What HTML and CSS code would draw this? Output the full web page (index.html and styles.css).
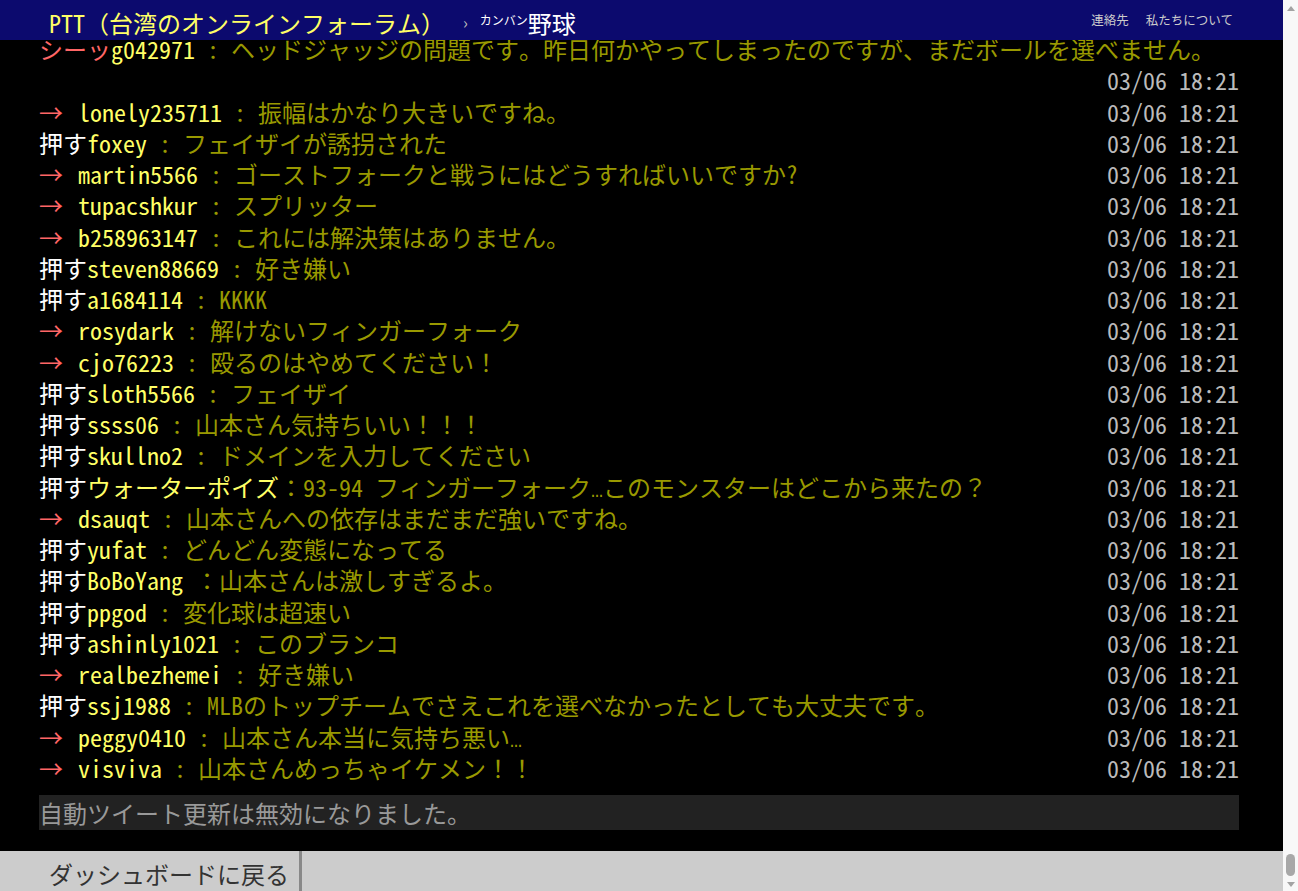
FILE: index.html
```html
<!DOCTYPE html>
<html lang="ja">
<head>
  <meta charset="UTF-8" />
  <meta name="viewport" content="width=device-width, initial-scale=1.0"/>
  <title>野球 | PTT</title>
  <link rel="stylesheet" href="styles.css">
</head>
<body>

<div class="page">
  <header class="topbar">
    <span class="brand">PTT（台湾のオンラインフォーラム）</span>
    <span class="crumb-sep">›</span>
    <span class="board-label">カンバン</span><span class="board">野球</span>
    <nav class="links">
      <a href="#">連絡先</a>
      <a href="#">私たちについて</a>
    </nav>
  </header>

  <main class="main">
    <div class="push"><span class="msg"><span class="tag boo">シーッ</span><span class="userid">g042971</span> <span class="content">: ヘッドジャッジの問題です。昨日何かやってしまったのですが、まだボールを選べません。</span></span><span class="time">03/06 18:21</span></div>
    <div class="push"><span class="msg"><span class="tag arrow">→</span> <span class="userid">lonely235711</span> <span class="content">: 振幅はかなり大きいですね。</span></span><span class="time">03/06 18:21</span></div>
    <div class="push"><span class="msg"><span class="tag">押す</span><span class="userid">foxey</span> <span class="content">: フェイザイが誘拐された</span></span><span class="time">03/06 18:21</span></div>
    <div class="push"><span class="msg"><span class="tag arrow">→</span> <span class="userid">martin5566</span> <span class="content">: ゴーストフォークと戦うにはどうすればいいですか?</span></span><span class="time">03/06 18:21</span></div>
    <div class="push"><span class="msg"><span class="tag arrow">→</span> <span class="userid">tupacshkur</span> <span class="content">: スプリッター</span></span><span class="time">03/06 18:21</span></div>
    <div class="push"><span class="msg"><span class="tag arrow">→</span> <span class="userid">b258963147</span> <span class="content">: これには解決策はありません。</span></span><span class="time">03/06 18:21</span></div>
    <div class="push"><span class="msg"><span class="tag">押す</span><span class="userid">steven88669</span> <span class="content">: 好き嫌い</span></span><span class="time">03/06 18:21</span></div>
    <div class="push"><span class="msg"><span class="tag">押す</span><span class="userid">a1684114</span> <span class="content">: KKKK</span></span><span class="time">03/06 18:21</span></div>
    <div class="push"><span class="msg"><span class="tag arrow">→</span> <span class="userid">rosydark</span> <span class="content">: 解けないフィンガーフォーク</span></span><span class="time">03/06 18:21</span></div>
    <div class="push"><span class="msg"><span class="tag arrow">→</span> <span class="userid">cjo76223</span> <span class="content">: 殴るのはやめてください！</span></span><span class="time">03/06 18:21</span></div>
    <div class="push"><span class="msg"><span class="tag">押す</span><span class="userid">sloth5566</span> <span class="content">: フェイザイ</span></span><span class="time">03/06 18:21</span></div>
    <div class="push"><span class="msg"><span class="tag">押す</span><span class="userid">ssss06</span> <span class="content">: 山本さん気持ちいい！！！</span></span><span class="time">03/06 18:21</span></div>
    <div class="push"><span class="msg"><span class="tag">押す</span><span class="userid">skullno2</span> <span class="content">: ドメインを入力してください</span></span><span class="time">03/06 18:21</span></div>
    <div class="push"><span class="msg"><span class="tag">押す</span><span class="userid">ウォーターポイズ</span><span class="content">：93-94 フィンガーフォーク<span class="ell">…</span>このモンスターはどこから来たの？</span></span><span class="time">03/06 18:21</span></div>
    <div class="push"><span class="msg"><span class="tag arrow">→</span> <span class="userid">dsauqt</span> <span class="content">: 山本さんへの依存はまだまだ強いですね。</span></span><span class="time">03/06 18:21</span></div>
    <div class="push"><span class="msg"><span class="tag">押す</span><span class="userid">yufat</span> <span class="content">: どんどん変態になってる</span></span><span class="time">03/06 18:21</span></div>
    <div class="push"><span class="msg"><span class="tag">押す</span><span class="userid">BoBoYang</span> <span class="content">：山本さんは激しすぎるよ。</span></span><span class="time">03/06 18:21</span></div>
    <div class="push"><span class="msg"><span class="tag">押す</span><span class="userid">ppgod</span> <span class="content">: 変化球は超速い</span></span><span class="time">03/06 18:21</span></div>
    <div class="push"><span class="msg"><span class="tag">押す</span><span class="userid">ashinly1021</span> <span class="content">: このブランコ</span></span><span class="time">03/06 18:21</span></div>
    <div class="push"><span class="msg"><span class="tag arrow">→</span> <span class="userid">realbezhemei</span> <span class="content">: 好き嫌い</span></span><span class="time">03/06 18:21</span></div>
    <div class="push"><span class="msg"><span class="tag">押す</span><span class="userid">ssj1988</span> <span class="content">: MLBのトップチームでさえこれを選べなかったとしても大丈夫です。</span></span><span class="time">03/06 18:21</span></div>
    <div class="push"><span class="msg"><span class="tag arrow">→</span> <span class="userid">peggy0410</span> <span class="content">: 山本さん本当に気持ち悪い<span class="ell">…</span></span></span><span class="time">03/06 18:21</span></div>
    <div class="push"><span class="msg"><span class="tag arrow">→</span> <span class="userid">visviva</span> <span class="content">: 山本さんめっちゃイケメン！！</span></span><span class="time">03/06 18:21</span></div>

    <div class="notice">自動ツイート更新は無効になりました。</div>
  </main>

  <footer class="bottombar">
    <a href="#" class="back">ダッシュボードに戻る</a>
  </footer>
</div>

<div class="scrollbar">
  <span class="sb-up"></span>
  <span class="sb-track"></span>
  <span class="sb-thumb"></span>
  <span class="sb-down"></span>
</div>

</body>
</html>
```

FILE: styles.css
```css
* {
  margin: 0;
  padding: 0;
  box-sizing: border-box;
}

body {
  background: #000;
  font-family: "Noto Sans Mono CJK JP", "Noto Sans CJK JP", "DejaVu Sans Mono", monospace;
  height: 891px;
  overflow: hidden;
  display: flex;
}

a {
  color: inherit;
  text-decoration: none;
}

.page {
  flex: 1;
  min-width: 0;
  display: flex;
  flex-direction: column;
}

/* top bar */
.topbar {
  height: 40px;
  flex-shrink: 0;
  background: #0c0a6e;
  display: flex;
  align-items: center;
  padding: 4px 50px 0 49px;
}

.brand {
  color: #ff6;
  font-size: 24px;
}

.crumb-sep {
  color: #bbb;
  font-size: 16px;
  margin: 0 12px 0 18px;
}

.board-label {
  color: #fff;
  font-size: 12px;
  margin-top: -6px;
}

.board {
  color: #fff;
  font-size: 24px;
  font-weight: 500;
}

.links {
  margin-left: auto;
  display: flex;
  gap: 17px;
  font-family: "Noto Sans CJK JP", sans-serif;
  font-size: 12.5px;
  color: #ccc;
  margin-top: -6px;
}

/* push list */
.main {
  flex: 1;
  min-height: 0;
  overflow: hidden;
  display: flex;
  flex-direction: column;
  justify-content: flex-end;
  padding: 0 0 21px 39px;
}

.push {
  width: 1200px;
  flex-shrink: 0;
  display: flex;
  flex-wrap: wrap;
  font-size: 24px;
  line-height: 31.25px;
  white-space: nowrap;
}

.tag {
  color: #fff;
}

.tag.arrow,
.tag.boo {
  color: #f66;
}

.tag.arrow {
  margin-right: 3px;
}

.userid {
  color: #ff6;
}

.content {
  color: #990;
}

.ell {
  font-family: "Liberation Mono", monospace;
  font-size: 20px;
  line-height: 0;
}

.time {
  margin-left: auto;
  color: #bbb;
}

.notice {
  width: 1200px;
  height: 35px;
  flex-shrink: 0;
  margin-top: 12px;
  background: #222;
  color: #999;
  font-size: 24px;
  line-height: 35px;
}

/* bottom bar */
.bottombar {
  height: 40px;
  flex-shrink: 0;
  background: #ccc;
  display: flex;
  padding-left: 39px;
}

.back {
  display: flex;
  align-items: center;
  padding: 4px 10px 0;
  border-right: 3px solid #888;
  color: #333;
  font-size: 24px;
}

/* scrollbar */
.scrollbar {
  width: 15px;
  flex-shrink: 0;
  background: #f8f8f8;
  display: flex;
  flex-direction: column;
  align-items: center;
}

.sb-up,
.sb-down {
  width: 0;
  height: 0;
  border-left: 4px solid transparent;
  border-right: 4px solid transparent;
}

.sb-up {
  margin-top: 6px;
  border-bottom: 5px solid #a3a3a3;
}

.sb-track {
  flex: 1;
}

.sb-thumb {
  width: 9px;
  height: 22px;
  border-radius: 5px;
  background: #a8a8a8;
  margin-bottom: 6px;
}

.sb-down {
  margin-bottom: 4px;
  border-top: 5px solid #a3a3a3;
}
```
